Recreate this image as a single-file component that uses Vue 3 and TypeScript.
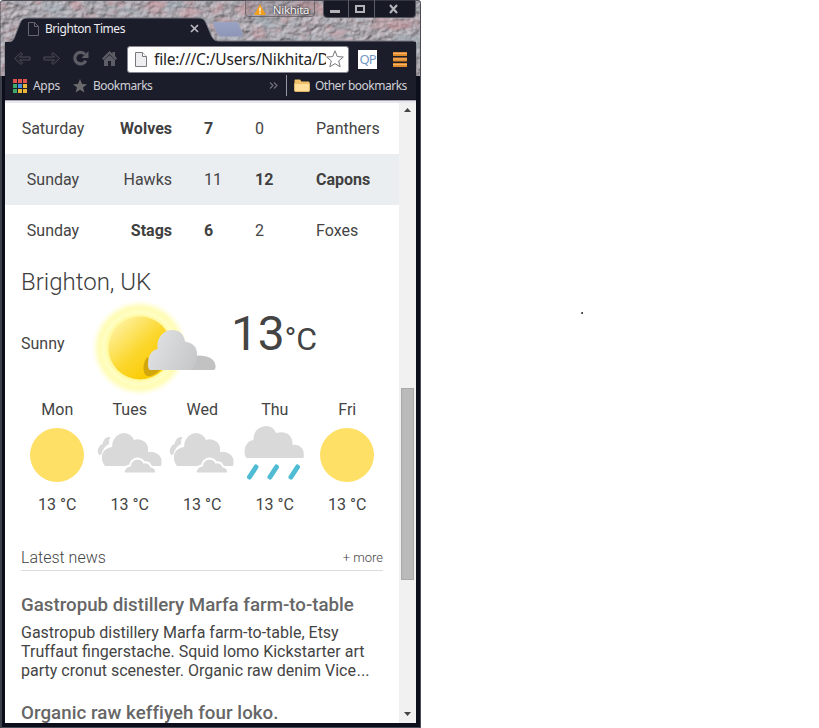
<script setup lang="ts">
interface Match {
  day: string
  home: string
  homeScore: number
  awayScore: number
  away: string
}
interface Forecast {
  day: string
  kind: 'sun' | 'cloud' | 'rain'
  temp: number
}

const matches: Match[] = [
  { day: 'Saturday', home: 'Wolves', homeScore: 7, awayScore: 0, away: 'Panthers' },
  { day: 'Sunday', home: 'Hawks', homeScore: 11, awayScore: 12, away: 'Capons' },
  { day: 'Sunday', home: 'Stags', homeScore: 6, awayScore: 2, away: 'Foxes' },
]
const forecast: Forecast[] = [
  { day: 'Mon', kind: 'sun', temp: 13 },
  { day: 'Tues', kind: 'cloud', temp: 13 },
  { day: 'Wed', kind: 'cloud', temp: 13 },
  { day: 'Thu', kind: 'rain', temp: 13 },
  { day: 'Fri', kind: 'sun', temp: 13 },
]
const summary: string[] = [
  'Gastropub distillery Marfa farm-to-table, Etsy',
  'Truffaut fingerstache. Squid lomo Kickstarter art',
  'party cronut scenester. Organic raw denim Vice',
]
const appColors: string[] = [
  '#e0524d', '#e0524d', '#e0524d',
  '#3fa86b', '#4a8fe0', '#e9b63a',
  '#3fa86b', '#e9b63a', '#e9b63a',
]
</script>

<template>
  <div class="desktop">
    <div class="window">
      <svg class="glass" width="421" height="76" viewBox="0 0 421 76">
        <defs>
          <filter id="stone" x="0" y="0" width="100%" height="100%" color-interpolation-filters="sRGB">
            <feTurbulence type="fractalNoise" baseFrequency="0.12 0.15" numOctaves="4" seed="8" result="n" />
            <feDiffuseLighting in="n" surfaceScale="1.7" diffuseConstant="1.1" lighting-color="#bcb7be" result="lit">
              <feDistantLight azimuth="225" elevation="55" />
            </feDiffuseLighting>
            <feTurbulence type="fractalNoise" baseFrequency="0.04 0.06" numOctaves="4" seed="21" result="c" />
            <feColorMatrix in="c" type="matrix" values="0 0 0 0 .80  0 0 0 0 .58  0 0 0 0 .60  4 0 0 0 -2" result="pink" />
            <feColorMatrix in="c" type="matrix" values="0 0 0 0 .64  0 0 0 0 .71  0 0 0 0 .75  0 4 0 0 -1.9" result="blue" />
            <feComponentTransfer in="pink" result="pink2"><feFuncA type="linear" slope="0.5" /></feComponentTransfer>
            <feComponentTransfer in="blue" result="blue2"><feFuncA type="linear" slope="0.45" /></feComponentTransfer>
            <feMerge>
              <feMergeNode in="lit" /><feMergeNode in="blue2" /><feMergeNode in="pink2" />
            </feMerge>
          </filter>
          <linearGradient id="newtab" x1="0" y1="0" x2="0" y2="1">
            <stop offset="0" stop-color="#9ba3c4" /><stop offset="1" stop-color="#8d96b8" />
          </linearGradient>
        </defs>
        <rect width="421" height="76" filter="url(#stone)" />
        <path d="M5 76V45q0-3 3-3h2c3-1 4-3 5-6l5-13q2-5 7-5h172q5 0 7 5l6 14q2 4 6 4h195q3 0 3 3v32z" fill="#1c1d2b" stroke="#777780" />
        <path d="M214 22h21.500q2.500 0 3.500 2.500l4 10q.8 2-1.500 2h-20q-3 0-4-2.500l-4.500-10q-.8-2 1-2z" fill="url(#newtab)" stroke="#a3a3b4" stroke-width=".7" />
        <path d="M0 76V3q0-2.500 3-2.500h415q2.500 0 2.500 3V76" fill="none" stroke="#4c4b54" />
      </svg>

      <header class="chrome">
        <div class="tabstrip">
          <div class="tab">
            <svg width="11" height="14" viewBox="0 0 11 14"><path d="M.5.5h6l4 4v9H.5zM6.500.5v4h4" fill="none" stroke="#646570" /></svg>
            <span class="tab-title">Brighton Times</span>
            <svg width="9" height="9" viewBox="0 0 9 9"><path d="M1 1l7 7M8 1L1 8" stroke="#b9bac2" stroke-width="1.700" /></svg>
          </div>
          <div class="user">
            <svg width="12" height="11" viewBox="0 0 12 11"><path d="M6 0l6 11H0z" fill="#f0a01e" /><path d="M6 3.500v4M6 8.300v1.400" stroke="#fff" stroke-width="1.300" /></svg>
            <span>Nikhita</span>
          </div>
          <svg class="controls" width="93" height="18" viewBox="0 0 93 18">
            <path d="M.5 0h92v14q0 3.500-3.500 3.500H4Q.5 17.500.5 14z" fill="#171925" stroke="#55555f" />
            <path d="M25.500 0v17M51.500 0v17" stroke="#5b5c66" />
            <path d="M7 10h10v3H7z" fill="#b2b2b9" />
            <rect x="33" y="6" width="8" height="6" fill="none" stroke="#b2b2b9" stroke-width="2" />
            <path d="M67 5l7 8M74 5l-7 8" stroke="#b2b2b9" stroke-width="2.200" />
          </svg>
        </div>

        <div class="toolbar">
          <svg width="108" height="20" viewBox="0 0 108 20">
            <g fill="#20212d" stroke="#4b4c56" stroke-linejoin="round">
              <path d="M.5 9.500l6.500-6 1.500 1.500-3 3H16v3H5.500l3 3L7 15.500z" />
              <path d="M45.500 9.500L39 3.500 37.500 5l3 3H30v3h10.500l-3 3 1.500 1.500z" />
            </g>
            <path d="M76 5.300a5.800 5.800 0 1 0 .8 6.500" transform="translate(-5)" fill="none" stroke="#5c5d65" stroke-width="3.200" />
            <path d="M74.500 2v7h-7z" fill="#5c5d65" />
            <path d="M93 9.500L100.500 2l3 2.800V3h2.500v4l2 2.500-1.500 1.500L100.500 5 94.500 11zM95 11l5.500-5 5.500 5v6h-4v-5h-3v5h-4z" transform="translate(-5)" fill="#5c5d65" />
          </svg>
          <div class="address">
            <svg width="12" height="15" viewBox="0 0 12 15"><path d="M.5.5h7l4 4v10H.5z" fill="#eeeef0" stroke="#797a80" /><path d="M7.500.5v4h4" fill="#fff" stroke="#797a80" /></svg>
            <span class="url">file:///C:/Users/Nikhita/D</span>
            <svg width="18" height="18" viewBox="0 0 18 18"><path d="M9 .8l2.300 5.800 6 .4-4.600 3.900 1.500 5.900L9 13.600l-5.200 3.200 1.500-5.900L.7 7l6-.4z" fill="#fff" stroke="#77787e" /></svg>
          </div>
          <span class="qp">QP</span>
          <svg class="menu" width="14" height="15" viewBox="0 0 14 15">
            <path d="M0 0h14v4H0zM0 5.500h14v4H0zM0 11h14v4H0z" fill="#e08c2e" />
            <path d="M0 1.500h14M0 7h14M0 12.500h14" stroke="#f9b468" />
          </svg>
        </div>

        <div class="bookmarks">
          <div class="apps"><i v-for="(c, i) in appColors" :key="i" :style="{ background: c }"></i></div>
          <span class="apps-label">Apps</span>
          <svg width="14" height="14" viewBox="0 0 14 14"><path d="M7 0l2 5 5 .300-4 3.200 1.400 5L7 10.800 2.600 13.500l1.400-5L0 5.300 5 5z" fill="#6b6b6e" /></svg>
          <span class="bm-label">Bookmarks</span>
          <svg width="9" height="7" viewBox="0 0 9 7"><path d="M1 .5l3 3-3 3M5 .5l3 3-3 3" fill="none" stroke="#70717a" stroke-width="1.200" /></svg>
          <i class="divider"></i>
          <svg width="16" height="13" viewBox="0 0 16 13"><path d="M.5 1.500q0-1 1-1h4.500l1.500 2h7q1 0 1 1v8q0 1-1 1h-13q-1 0-1-1z" fill="#f0c36a" /><path d="M.5 4.500h15v7q0 1-1 1h-13q-1 0-1-1z" fill="#ffdf9a" stroke="#e9b962" stroke-width=".7" /></svg>
          <span class="other-label">Other bookmarks</span>
        </div>
      </header>

      <div class="viewport">
        <main class="page">
          <section class="scores">
            <div v-for="(m, i) in matches" :key="i" class="match" :class="{ shaded: i === 1 }">
              <span class="day">{{ m.day }}</span>
              <span class="home" :class="{ winner: m.homeScore > m.awayScore }">{{ m.home }}</span>
              <span class="score" :class="{ winner: m.homeScore > m.awayScore }">{{ m.homeScore }}</span>
              <span :class="{ winner: m.awayScore > m.homeScore }">{{ m.awayScore }}</span>
              <span :class="{ winner: m.awayScore > m.homeScore }">{{ m.away }}</span>
            </div>
          </section>

          <section class="weather">
            <h2>Brighton, UK</h2>
            <div class="today">
              <span class="condition">Sunny</span>
              <svg class="hero" width="128" height="96" viewBox="0 0 128 96">
                <defs>
                  <radialGradient id="halo">
                    <stop offset=".66" stop-color="#fff9a0" /><stop offset=".74" stop-color="#fffec4" /><stop offset=".84" stop-color="#fffcb4" /><stop offset=".91" stop-color="#fffdc8" stop-opacity=".7" /><stop offset="1" stop-color="#fffee0" stop-opacity="0" />
                  </radialGradient>
                  <linearGradient id="sun" x1=".1" y1=".15" x2=".75" y2=".85">
                    <stop offset="0" stop-color="#fff09a" /><stop offset=".55" stop-color="#fbd72f" /><stop offset="1" stop-color="#fccb00" />
                  </linearGradient>
                  <linearGradient id="vapor" x1="0" y1=".4" x2="1" y2=".8">
                    <stop offset="0" stop-color="#e0e1e3" /><stop offset="1" stop-color="#c6c7c9" />
                  </linearGradient>
                </defs>
                <circle cx="49.500" cy="48" r="48" fill="url(#halo)" />
                <circle cx="50" cy="48" r="31.500" fill="url(#sun)" />
                <path d="M57 57q-5 8-3 15 1 5 7 4 6-2 10-7z" fill="#d2a70e" />
                <path d="M88 70l10-12q4-2.500 10-2.500 16 0 17.500 10 .3 4.500-2 4.500z" fill="#c2c2c3" />
                <path d="M60 70q-2-1-2-5 0-14 9.500-16-1-9 4-14 4-5 10.500-5 11 0 13 11.500 12 2 12 12.500 .5 9-5 16z" fill="url(#vapor)" />
              </svg>
              <span class="temp">13<small>°C</small></span>
            </div>
            <div class="forecast">
              <div v-for="f in forecast" :key="f.day" class="slot">
                <span>{{ f.day }}</span>
                <svg v-if="f.kind === 'sun'" width="68" height="68" viewBox="0 0 68 68"><circle cx="34" cy="35" r="27" fill="#ffe067" /></svg>
                <svg v-else-if="f.kind === 'cloud'" width="68" height="68" viewBox="0 0 68 68">
                  <g fill="#d9d9d9">
                    <path d="M3.500 35q-3-3-1-7 1-3 4-4 1-6 6-7h2q-2 3-1.500 7-6 3-8 11z" />
                    <path d="M9 46q-4-5-3-11 2-7 10-8 0-8 6-12 6-4 12 0 3 2 4 5 6-2 11 2 4 4 3 10 6-1 11 3 4 5 2 11H9z" />
                    <path d="M28 53.500q-1-3 1-5 2-3 5-3 1-6 7-7 5 0 7 4 5-1 7 4 6 1 5 7z" stroke="#fff" stroke-width="2" />
                  </g>
                </svg>
                <svg v-else width="68" height="68" viewBox="0 0 68 68">
                  <path d="M5.500 40q-2-2-2-7 1-10 9-11 0-9 6-12 7-4 13 0 2.500 2 3.500 5 7-2 12 1 5 4 4.500 11 6-1 10 4 2 4 1 9z" transform="translate(0 -2)" fill="#d9d9d9" />
                  <path d="M15 47L8.500 57M35.500 47L29 57M56.500 47L50 57" stroke="#4fbcd4" stroke-width="5" stroke-linecap="round" />
                </svg>
                <span class="degrees">{{ f.temp }} °C</span>
              </div>
            </div>
          </section>

          <section class="news">
            <div class="news-head"><span>Latest news</span><a>+ more</a></div>
            <article>
              <h3>Gastropub distillery Marfa farm-to-table</h3>
              <p><span v-for="(line, i) in summary" :key="line">{{ line }}<b v-if="i === summary.length - 1">…</b></span></p>
            </article>
            <article class="next"><h3>Organic raw keffiyeh four loko.</h3></article>
          </section>
        </main>
        <aside class="scrollbar">
          <svg width="7" height="4" viewBox="0 0 7 4"><path d="M0 4l3.500-4L7 4z" fill="#454545" /></svg>
          <div class="thumb"></div>
          <svg class="down" width="7" height="4" viewBox="0 0 7 4"><path d="M0 0h7L3.500 4z" fill="#454545" /></svg>
        </aside>
      </div>
    </div>
    <span class="speck"></span>
  </div>
</template>

<style>
body { background: #fff; overflow: hidden; }
</style>

<style scoped>
* { box-sizing: border-box; }
svg { display: block; flex: none; }
.desktop { position: relative; width: 819px; height: 728px; font-family: Roboto, sans-serif; }
.window { position: relative; display: flex; flex-direction: column; width: 421px; height: 728px; padding: 0 5px 5px; background: #0c0e1b; border-radius: 4px 4px 0 0; overflow: hidden; box-shadow: inset 2px 0 #3b3f48, inset -1px -1px #4b4d56; }
.glass { position: absolute; left: 0; top: 0; }
.chrome { position: relative; height: 100px; font-family: "Noto Sans", "Open Sans", sans-serif; color: #d0d1d6; }
.tabstrip { display: flex; height: 42px; }
.tab { display: flex; align-items: center; width: 191px; height: 23px; margin-top: 17px; padding-left: 23px; }
.tab-title { flex: 1; margin-left: 6px; font-size: 12px; letter-spacing: -0.45px; line-height: 20px; color: #eeeef2; }
.tab > svg:last-child { margin-right: -5px; }
.user { display: flex; align-items: center; justify-content: center; gap: 7px; width: 70px; height: 17px; margin-left: 51px; border: 1px solid rgba(85, 80, 87, .65); border-top: 0; border-radius: 0 0 4px 4px; padding: 3px 0 0 3px; font-size: 11.5px; color: #f4f2f5; text-shadow: 0 0 2px #333, 0 0 2px #444; background: rgba(130, 124, 135, .25); letter-spacing: -.3px; flex: none; }
.controls { margin-left: 8px; }
.toolbar { display: flex; align-items: center; height: 34px; padding-left: 9px; background: #1c1d2b; }
.address { display: flex; align-items: center; width: 222px; height: 27px; margin-left: 5px; padding: 0 4px 0 7px; background: #fff; border: 1px solid #868791; border-radius: 3px; }
.url { flex: 1; min-width: 0; margin-left: 7px; overflow: hidden; white-space: nowrap; font-size: 15.5px; line-height: 22px; letter-spacing: -.18px; color: #242424; }
.qp { width: 19px; height: 19px; margin-left: 9px; background: #fff; color: #7599c5; font-size: 13px; line-height: 19px; text-align: center; letter-spacing: -.9px; }
.menu { margin-left: 16px; }
.bookmarks { display: flex; align-items: center; height: 24px; padding: 0 0 4px 8px; background: #1c1d2b; border-bottom: 1px solid #12131e; font-size: 12px; letter-spacing: -.5px; white-space: nowrap; }
.apps { display: grid; grid-template-columns: repeat(3, 4px); grid-auto-rows: 4px; gap: 1px; }
.apps-label { width: 40px; margin-left: 6px; letter-spacing: -.3px; }
.bm-label { width: 176px; margin-left: 6px; }
.divider { width: 1px; height: 21px; margin: 0 7px 0 8px; background: #9697a1; flex: none; }
.other-label { margin-left: 5px; letter-spacing: -.5px; }
.viewport { position: relative; display: flex; height: 623px; background: #fff; border-top: 1px solid #aaa8b2; overflow: hidden; box-shadow: inset 0 2px #e8e7ef; }
.page { width: 394px; padding-top: 2px; color: #444; font-size: 16px; }
.match { display: grid; grid-template-columns: 96px 71px 83px 61px 83px; align-items: center; height: 51px; }
.shaded { background: #ebeef1; }
.day { text-align: center; }
.home { text-align: right; }
.score { padding-left: 32px; }
.winner { font-weight: 700; color: #404040; }
.weather { padding: 8px 16px 0; }
h2 { margin: 0; font-size: 24px; line-height: 36px; font-weight: 300; color: #3d3d3d; }
.today { display: flex; align-items: center; height: 96px; }
.condition { width: 69px; padding-bottom: 9px; }
.hero { margin-right: 13px; }
.temp { display: flex; align-items: baseline; padding-bottom: 24px; font-size: 48px; line-height: 56px; letter-spacing: -.2px; }
.temp small { font-size: 32px; }
.forecast { display: grid; grid-template-columns: repeat(5, 72.5px); margin-top: 4px; }
.slot { display: flex; flex-direction: column; align-items: center; line-height: 20px; }
.degrees { margin-top: 7px; }
.news { width: 362px; margin: 32px 0 0 16px; }
.news-head { display: flex; justify-content: space-between; align-items: center; height: 24px; padding-bottom: 3px; border-bottom: 1px solid #dcdcdc; font-weight: 300; }
.news-head a { font-size: 13px; }
h3 { margin: 23px 0 0; font-size: 18.72px; line-height: 22px; font-weight: 500; color: #666; white-space: nowrap; }
p { margin: 7px 0 0; line-height: 19px; font-size: 16px; white-space: nowrap; }
p span { display: block; }
p b { font-weight: 300; font-size: 22px; line-height: 1px; }
.next h3 { margin-top: 23px; line-height: 21px; letter-spacing: .05px; }
.scrollbar { display: flex; flex-direction: column; align-items: center; width: 17px; padding-top: 5px; background: #f1f1f1; margin-top: 2px; }
.thumb { width: 13px; height: 192px; margin-top: 276px; background: #bababa; border: 1px solid #a9a9a9; }
.down { margin-top: 132px; }
.speck { position: absolute; left: 581px; top: 312px; width: 2px; height: 2px; background: linear-gradient(90deg, #999, #222); }
</style>
